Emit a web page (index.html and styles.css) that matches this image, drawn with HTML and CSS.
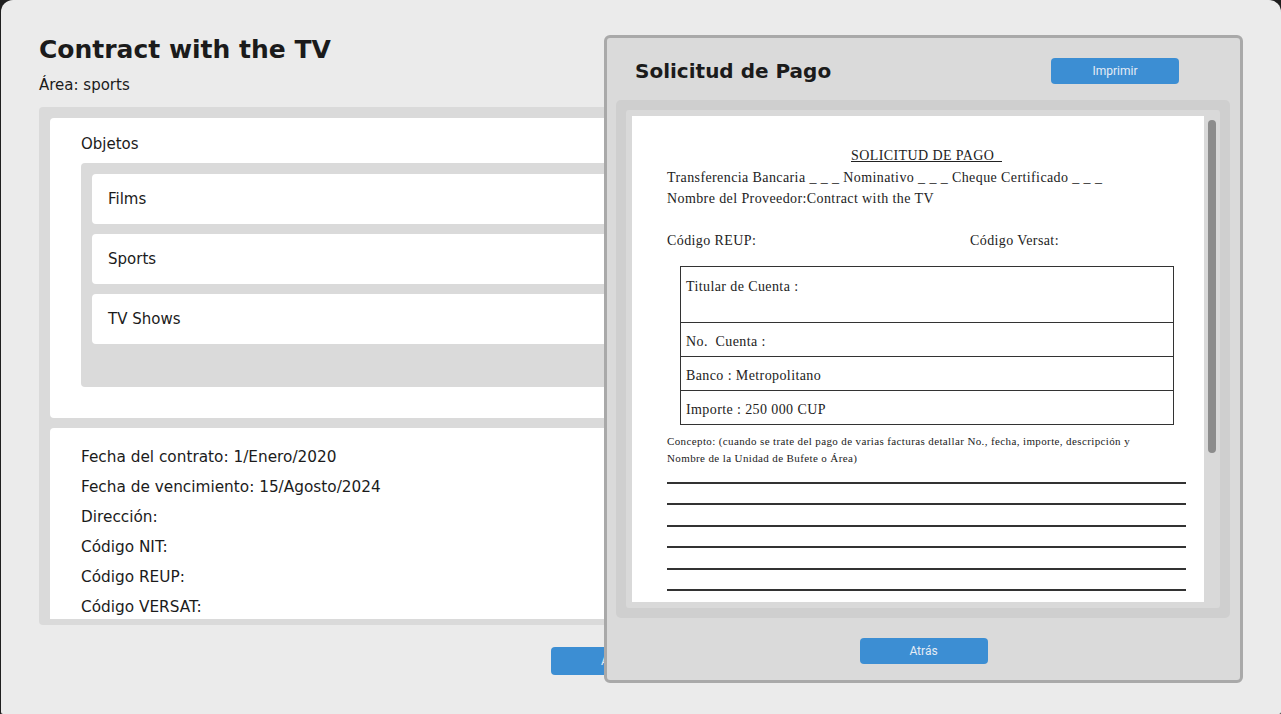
FILE: index.html
```html
<!DOCTYPE html>
<html lang="es">
<head>
<meta charset="utf-8">
<title>Contract with the TV</title>
<link rel="stylesheet" href="styles.css">
</head>
<body>
<div class="app">
  <main class="page">
    <h1 class="title">Contract with the TV</h1>
    <p class="area">Área: sports</p>
    <section class="panel">
      <div class="panel-scroll">
        <div class="card card-objects">
          <div class="label">Objetos</div>
          <div class="object-list">
            <div class="object-item">Films</div>
            <div class="object-item">Sports</div>
            <div class="object-item">TV Shows</div>
          </div>
        </div>
        <div class="card card-details">
          <div class="detail">Fecha del contrato: 1/Enero/2020</div>
          <div class="detail">Fecha de vencimiento: 15/Agosto/2024</div>
          <div class="detail">Dirección:</div>
          <div class="detail">Código NIT:</div>
          <div class="detail">Código REUP:</div>
          <div class="detail">Código VERSAT:</div>
        </div>
      </div>
    </section>
    <div class="page-actions">
      <button class="btn btn-wide">Atrás</button>
    </div>
  </main>

  <div class="modal">
    <header class="modal-header">
      <h2 class="modal-title">Solicitud de Pago</h2>
      <button class="btn">Imprimir</button>
    </header>
    <div class="viewer">
      <div class="viewer-inner">
        <div class="doc">
          <div class="doc-title"><span>SOLICITUD DE PAGO&nbsp;&nbsp;</span></div>
          <div class="doc-line">Transferencia Bancaria _ _ _ Nominativo _ _ _ Cheque Certificado _ _ _</div>
          <div class="doc-line">Nombre del Proveedor:Contract with the TV</div>
          <div class="doc-codes">
            <span class="code-reup">Código REUP:</span>
            <span>Código Versat:</span>
          </div>
          <div class="doc-table">
            <div class="doc-row row-tall">Titular de Cuenta :</div>
            <div class="doc-row">No.&nbsp; Cuenta :</div>
            <div class="doc-row">Banco : Metropolitano</div>
            <div class="doc-row">Importe : 250 000 CUP</div>
          </div>
          <div class="doc-concept">Concepto: (cuando se trate del pago de varias facturas detallar No., fecha, importe, descripción y<br>Nombre de la Unidad de Bufete o Área)</div>
          <div class="doc-rules">
            <div class="rule"></div>
            <div class="rule"></div>
            <div class="rule"></div>
            <div class="rule"></div>
            <div class="rule"></div>
            <div class="rule"></div>
            <div class="rule"></div>
          </div>
        </div>
        <div class="scrollbar"><div class="thumb"></div></div>
      </div>
    </div>
    <footer class="modal-footer">
      <button class="btn">Atrás</button>
    </footer>
  </div>
</div>
</body>
</html>
```

FILE: styles.css
```css
* { box-sizing: border-box; }

html, body {
  margin: 0;
  height: 100%;
}

body {
  background: #1f1f1f;
  font-family: "DejaVu Sans", sans-serif;
  color: #1b1b1b;
  overflow: hidden;
}

.app {
  position: relative;
  margin-left: 1px;
  height: 714px;
  background: #ebebeb;
  border-radius: 12px 12px 2px 2px;
}

.page {
  padding: 35px 39px 0 38px;
}

.title {
  margin: 0;
  font-size: 25px;
  line-height: 30px;
  font-weight: bold;
}

.area {
  margin: 10px 0 0;
  font-size: 15px;
  line-height: 20px;
}

.panel {
  margin-top: 12px;
  background: #dadada;
  border-radius: 4px;
  padding: 11px 11px 6px;
}

.panel-scroll {
  height: 501px;
  overflow: hidden;
  display: flex;
  flex-direction: column;
  gap: 10px;
}

.card {
  background: #ffffff;
  border-radius: 4px;
  flex-shrink: 0;
}

.card-objects {
  padding: 17px 31px 31px;
}

.label {
  font-size: 15px;
  line-height: 19px;
}

.object-list {
  margin-top: 9px;
  background: #dadada;
  border-radius: 4px;
  padding: 11px 11px 43px;
  display: flex;
  flex-direction: column;
  gap: 10px;
}

.object-item {
  background: #ffffff;
  border-radius: 4px;
  height: 50px;
  padding: 0 16px;
  display: flex;
  align-items: center;
  font-size: 15px;
}

.card-details {
  padding: 14px 31px 20px;
}

.detail {
  font-size: 15.3px;
  line-height: 30px;
}

.page-actions {
  display: flex;
  padding: 22px 0 0 512px;
}

.btn {
  width: 128px;
  height: 26px;
  border: none;
  border-radius: 4px;
  background: #3c8ed3;
  color: #e4ecf5;
  font-family: Roboto, "Liberation Sans", sans-serif;
  font-size: 12px;
  padding: 0;
}

.btn-wide {
  height: 28px;
}

/* Modal */
.modal {
  position: absolute;
  left: 603px;
  top: 35px;
  width: 639px;
  height: 648px;
  background: #dadada;
  border: 3px solid #a9a9a9;
  border-radius: 6px;
  display: flex;
  flex-direction: column;
}

.modal-header {
  display: flex;
  justify-content: space-between;
  align-items: flex-start;
  padding: 20px 61px 0 28px;
  height: 62px;
}

.modal-title {
  margin: 0;
  font-size: 20px;
  line-height: 26px;
  font-weight: bold;
}

.viewer {
  margin: 0 10px 0 9px;
  height: 518px;
  background: #cfcfcf;
  border-radius: 5px;
  padding: 10px;
}

.viewer-inner {
  height: 100%;
  background: #d9d9d9;
  border-radius: 3px;
  padding: 6px 0 6px 6px;
  display: flex;
}

.doc {
  flex: 1;
  background: #ffffff;
  overflow: hidden;
  padding: 29px 18px 0 35px;
  font-family: "Liberation Serif", "DejaVu Serif", serif;
  font-size: 14px;
  letter-spacing: 0.4px;
  line-height: 21px;
  color: #222;
}

.doc-title {
  text-align: center;
  margin-bottom: 1px;
}

.doc-title span {
  text-decoration: underline;
}

.doc-codes {
  display: flex;
  margin-top: 21px;
}

.code-reup {
  width: 303px;
}

.doc-table {
  margin: 15px 12px 0 13px;
  border: 1px solid #333;
}

.doc-row {
  height: 34px;
  padding: 8px 5px 0;
  border-top: 1px solid #333;
}

.doc-row:first-child {
  border-top: none;
}

.row-tall {
  height: 55px;
  padding-top: 9px;
}

.doc-concept {
  margin-top: 8px;
  font-size: 11px;
  letter-spacing: 0.38px;
  line-height: 17px;
}

.doc-rules {
  margin-top: 15px;
  display: flex;
  flex-direction: column;
  gap: 19.4px;
}

.rule {
  height: 2px;
  background: #333;
}

.scrollbar {
  width: 16px;
  padding: 4px 4px 0 4px;
}

.thumb {
  height: 333px;
  background: #8c8c8c;
  border-radius: 4px;
}

.modal-footer {
  display: flex;
  justify-content: center;
  padding-top: 20px;
}
```
